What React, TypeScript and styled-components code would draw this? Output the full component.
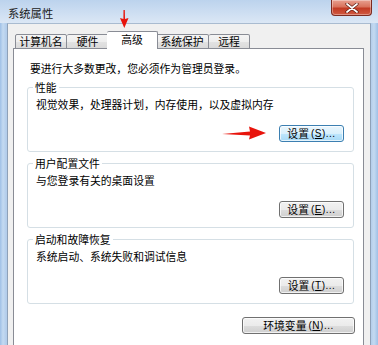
import React from "react";
import styled, { createGlobalStyle } from "styled-components";

const Global = createGlobalStyle`
  html, body { margin: 0; padding: 0; background: #ffffff; }
  body { font-family: "Noto Sans CJK SC", "Noto Sans", sans-serif; }
`;

const Window = styled.div`
  position: relative;
  width: 378px;
  height: 345px;
  overflow: hidden;
  display: flex;
  flex-direction: column;
  background: linear-gradient(90deg, #9fc0e6 0px, #c4daf1 3px, #b3cdeb 6px, #b3cdeb 371px, #c4daf1 374px, #9fc0e6 378px);
  font-size: 10.8px;
  color: #000;
`;

const TitleBar = styled.div`
  height: 23px;
  flex: none;
  display: flex;
  align-items: flex-start;
  justify-content: space-between;
  padding: 0 6px 0 8px;
  background: linear-gradient(180deg, #bcd3ed 0%, #cadcf1 45%, #dbe7f5 100%);
`;

const Title = styled.span`
  font-size: 11.3px;
  line-height: 14px;
  margin-top: 6px;
  color: #1a1a1a;
`;

const CloseButton = styled.div`
  width: 41px;
  height: 16px;
  box-sizing: border-box;
  border: 1px solid #7c2b20;
  border-top: none;
  border-radius: 0 0 4px 4px;
  background: linear-gradient(180deg, #e8a090 0%, #d9735d 45%, #c23b24 55%, #d05a42 100%);
  display: flex;
  align-items: center;
  justify-content: center;
  box-shadow: inset 0 0 0 1px rgba(255, 255, 255, 0.35);
`;

const Body = styled.div`
  flex: 1;
  display: flex;
  padding: 0 7px 0 7px;
`;

const Client = styled.div`
  flex: 1;
  display: flex;
  flex-direction: column;
  background: #f0f0f0;
  border-left: 1px solid #8ea1b8;
  border-right: 1px solid #8ea1b8;
  border-top: 1px solid #a9bbd0;
  padding: 7px 6px 0 5px;
`;

const TabStrip = styled.div`
  display: flex;
  align-items: flex-end;
  padding-left: 2px;
  position: relative;
  z-index: 1;
  margin-bottom: -1px;
`;

const Tab = styled.div<{ $w: number; $active?: boolean }>`
  box-sizing: border-box;
  width: ${(p) => p.$w}px;
  height: ${(p) => (p.$active ? 18 : 15)}px;
  margin: ${(p) => (p.$active ? "0 -2px" : "0")};
  border: 1px solid #898c95;
  border-bottom: ${(p) => (p.$active ? "none" : "1px solid #898c95")};
  border-radius: 2px 2px 0 0;
  background: ${(p) =>
    p.$active ? "#ffffff" : "linear-gradient(180deg, #f4f4f4 0%, #eeeeee 50%, #e3e3e3 51%, #dadada 100%)"};
  display: flex;
  align-items: center;
  justify-content: center;
  line-height: 13px;
  padding-bottom: ${(p) => (p.$active ? 2 : 0)}px;
  position: relative;
  z-index: ${(p) => (p.$active ? 2 : 1)};
  & + & {
    border-left: ${(p) => (p.$active ? "1px solid #898c95" : "none")};
  }
`;

const Panel = styled.div`
  background: #ffffff;
  border: 1px solid #898c95;
  padding: 12px 9px 20px 13px;
  display: flex;
  flex-direction: column;
`;

const Intro = styled.div`
  line-height: 14px;
  margin-left: 3px;
`;

const Group = styled.fieldset`
  margin: 4px 0 0 0;
  padding: 0 9px 9px 7px;
  border: 1px solid #d5dfe5;
  border-radius: 3px;
  min-width: 0;
  &:first-of-type {
    margin-top: 5px;
  }
`;

const Legend = styled.legend`
  padding: 0 2px;
  margin-left: -2px;
  line-height: 14px;
`;

const Desc = styled.div`
  line-height: 14px;
  margin: 3px 0 0 1px;
`;

const ButtonRow = styled.div<{ $top: number; $right?: number }>`
  display: flex;
  justify-content: flex-end;
  margin-top: ${(p) => p.$top}px;
  margin-right: ${(p) => p.$right ?? 0}px;
`;

const Button = styled.div<{ $w: number; $default?: boolean }>`
  box-sizing: border-box;
  width: ${(p) => p.$w}px;
  height: 17px;
  border: 1px solid ${(p) => (p.$default ? "#3c7fb1" : "#707070")};
  border-radius: 3px;
  background: ${(p) =>
    p.$default
      ? "linear-gradient(180deg, #eaf6fd 0%, #d9f0fc 50%, #bee6fd 51%, #a7d9f5 100%)"
      : "linear-gradient(180deg, #f2f2f2 0%, #ebebeb 50%, #dddddd 51%, #cfcfcf 100%)"};
  box-shadow: inset 0 0 0 1px rgba(255, 255, 255, 0.7);
  display: flex;
  align-items: center;
  justify-content: center;
  line-height: 13px;
  white-space: nowrap;
`;

const Key = styled.span`
  font-family: "Liberation Sans", Arial, sans-serif;
  font-size: 10px;
  margin-left: 2px;
  letter-spacing: 0.5px;
`;

const Underline = styled.span`
  text-decoration: underline;
`;

const Overlay = styled.svg`
  position: absolute;
  left: 0;
  top: 0;
  pointer-events: none;
  z-index: 5;
`;

const CloseX = () => (
  <svg width="14" height="10" viewBox="0 0 14 10">
    <path d="M2 1 L12 9 M12 1 L2 9" stroke="#5a1a10" strokeWidth="3.2" strokeLinecap="round" />
    <path d="M2 1 L12 9 M12 1 L2 9" stroke="#ffffff" strokeWidth="1.8" strokeLinecap="round" />
  </svg>
);

const Btn: React.FC<{ w: number; label: string; k: string; def?: boolean }> = ({ w, label, k, def }) => (
  <Button $w={w} $default={def}>
    {label}
    <Key>
      (<Underline>{k}</Underline>)...
    </Key>
  </Button>
);

export default function App() {
  return (
    <>
      <Global />
      <Window>
        <TitleBar>
          <Title>系统属性</Title>
          <CloseButton>
            <CloseX />
          </CloseButton>
        </TitleBar>
        <Body>
          <Client>
            <TabStrip>
              <Tab $w={52}>计算机名</Tab>
              <Tab $w={42}>硬件</Tab>
              <Tab $w={51} $active>
                高级
              </Tab>
              <Tab $w={53}>系统保护</Tab>
              <Tab $w={41}>远程</Tab>
            </TabStrip>
            <Panel>
              <Intro>要进行大多数更改，您必须作为管理员登录。</Intro>
              <Group>
                <Legend>性能</Legend>
                <Desc>视觉效果，处理器计划，内存使用，以及虚拟内存</Desc>
                <ButtonRow $top={14}>
                  <Btn w={65} label="设置" k="S" def />
                </ButtonRow>
              </Group>
              <Group>
                <Legend>用户配置文件</Legend>
                <Desc>与您登录有关的桌面设置</Desc>
                <ButtonRow $top={14}>
                  <Btn w={65} label="设置" k="E" />
                </ButtonRow>
              </Group>
              <Group>
                <Legend>启动和故障恢复</Legend>
                <Desc>系统启动、系统失败和调试信息</Desc>
                <ButtonRow $top={14}>
                  <Btn w={65} label="设置" k="T" />
                </ButtonRow>
              </Group>
              <ButtonRow $top={13} $right={-1}>
                <Btn w={113} label="环境变量" k="N" />
              </ButtonRow>
            </Panel>
          </Client>
        </Body>
        <Overlay width="378" height="345" viewBox="0 0 378 345">
          <path d="M123.5 10 L124.8 10 L125 19 L128.5 18 L124.3 28 L120 18 L123.4 19 Z" fill="#e8140c" />
          <path d="M222 134 L250 131.5 L249 126.5 L266 133 L249 139.5 L250 135.5 Z" fill="#e8140c" />
        </Overlay>
      </Window>
    </>
  );
}
